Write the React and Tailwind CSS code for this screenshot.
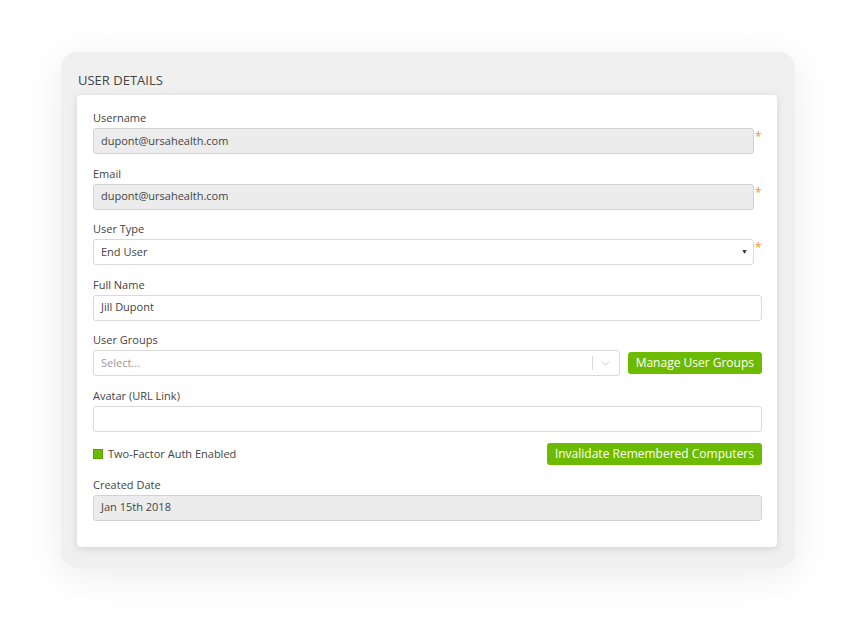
import { ChevronDown } from "lucide-react";

const font = { fontFamily: '"Open Sans", "Noto Sans", sans-serif' };

const Label = ({ children }) => (
  <div className="text-[11px] leading-4 text-[#444] mb-[2px]">{children}</div>
);

const Required = () => (
  <span className="w-[8px] shrink-0 text-[#f7941d] text-[12px] leading-none mt-[3px] pl-[1px]">*</span>
);

const TextBox = ({ value, disabled, required, placeholder }) => (
  <div className="flex items-start">
    <div
      className={`flex-1 h-[26px] rounded-[3px] border px-[7px] flex items-center text-[11px] text-[#444] ${
        disabled ? "bg-[#ececec] border-[#d2d2d2]" : "bg-white border-[#d9d9d9]"
      }`}
    >
      {value || <span className="text-[#999]">{placeholder}</span>}
    </div>
    {required && <Required />}
  </div>
);

const Field = ({ label, children }) => (
  <div>
    <Label>{label}</Label>
    {children}
  </div>
);

const GreenButton = ({ children }) => (
  <button className="h-[22px] px-[8px] rounded-[3px] bg-[#6dbb00] text-white text-[12px] leading-none whitespace-nowrap">
    {children}
  </button>
);

export default function App() {
  return (
    <div className="min-h-[636px] bg-white pt-[52px]" style={font}>
      <div className="mx-auto w-[734px] rounded-[16px] bg-[#f0f0f0] shadow-[0_8px_40px_rgba(0,0,0,0.08)] pt-[18px] pb-[21px] pl-[16px] pr-[18px]">
        <h2 className="text-[13px] leading-5 text-[#444] uppercase mb-[5px] pl-[1px]">User Details</h2>

        <div className="bg-white rounded-[4px] shadow-[0_2px_8px_rgba(0,0,0,0.12)] pt-[15px] pb-[26px] pl-[16px] pr-[15px] flex flex-col gap-[11.5px]">
          <Field label="Username">
            <TextBox value="dupont@ursahealth.com" disabled required />
          </Field>

          <Field label="Email">
            <TextBox value="dupont@ursahealth.com" disabled required />
          </Field>

          <Field label="User Type">
            <div className="flex items-start">
              <div className="flex-1 h-[26px] rounded-[3px] border border-[#d9d9d9] bg-white px-[7px] flex items-center justify-between text-[11px] text-[#444]">
                <span>End User</span>
                <span className="text-[7px] text-[#333] -mr-[2px]">▼</span>
              </div>
              <Required />
            </div>
          </Field>

          <Field label="Full Name">
            <TextBox value="Jill Dupont" />
          </Field>

          <Field label="User Groups">
            <div className="flex items-center gap-[8px]">
              <div className="flex-1 h-[26px] rounded-[3px] border border-[#d9d9d9] bg-white pl-[7px] flex items-center text-[11px] text-[#999]">
                <span className="flex-1">Select...</span>
                <span className="w-px h-[14px] bg-[#d9d9d9]" />
                <span className="w-[26px] flex items-center justify-center text-[#bbb]">
                  <ChevronDown size={13} strokeWidth={1.5} />
                </span>
              </div>
              <GreenButton>Manage User Groups</GreenButton>
            </div>
          </Field>

          <Field label="Avatar (URL Link)">
            <TextBox value="" />
          </Field>

          <div className="flex items-center justify-between h-[22px]">
            <label className="flex items-center gap-[5px] text-[11px] text-[#444]">
              <span className="w-[10px] h-[10px] bg-[#6dbb00] border border-[#5aa000]" />
              Two-Factor Auth Enabled
            </label>
            <GreenButton>Invalidate Remembered Computers</GreenButton>
          </div>

          <Field label="Created Date">
            <TextBox value="Jan 15th 2018" disabled />
          </Field>
        </div>
      </div>
    </div>
  );
}
